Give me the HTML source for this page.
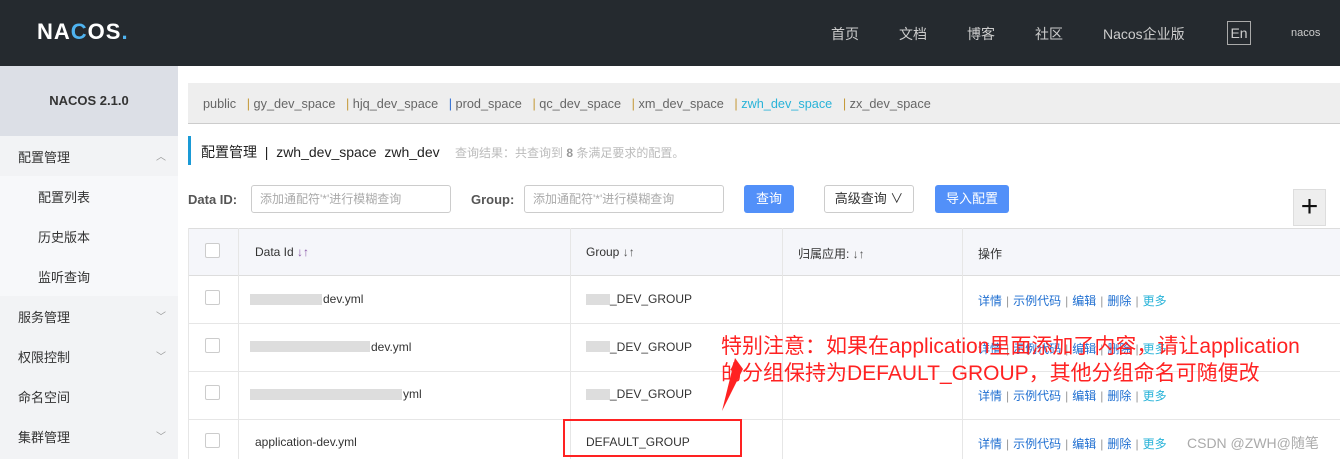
<!DOCTYPE html><html><head><meta charset="utf-8"><style>
*{box-sizing:border-box;margin:0;padding:0}
html,body{width:1340px;height:459px;overflow:hidden}
body{background:#fff;font-family:"Liberation Sans","Noto Sans CJK SC",sans-serif;font-size:12px;color:#333;position:relative}
.a{position:absolute}
.hdr{left:0;top:0;width:1340px;height:66px;background:#252a2f}
.nav{color:#ccc;font-size:14px;top:24px}
.side{left:0;top:66px;width:178px;height:393px;background:#f2f3f5}
.mi{position:absolute;left:0;width:178px;height:40px;line-height:44px;padding-left:18px;font-size:13px;color:#333}
.sub{background:#f7f8fa;padding-left:38px}
.chev{position:absolute;right:12px;top:0;color:#999;font-size:10px}
.ns{color:#666;font-size:12.7px;top:97px}
.bar{color:#c59a3a}
.th{top:228px;height:48px;background:#f5f6fa;border-top:1px solid #ddd;border-bottom:1px solid #ddd}
.row{height:48px;border-bottom:1px solid #e6e6e6}
.vl{width:1px;background:#e6e6e6}
.cb{width:15px;height:15px;border:1px solid #ccc;border-radius:2px;background:#fff}
.op{color:#1f6fd1;font-size:12px}
.op i{color:#999;font-style:normal;margin:0 4px}
.op b{font-weight:normal;color:#29b3d8}
.blur{background:#ddd;height:11px}
.btn{height:28px;line-height:28px;text-align:center;font-size:13px;border-radius:3px}
</style></head><body>
<div class="a hdr"></div>
<div class="a" style="left:37px;top:19px;color:#fff;font-size:22px;font-weight:bold;letter-spacing:1px">NA<span style="color:#4fb3f0">C</span>OS<span style="color:#4fb3f0">.</span></div>
<div class="a nav" style="left:831px">首页</div>
<div class="a nav" style="left:899px">文档</div>
<div class="a nav" style="left:967px">博客</div>
<div class="a nav" style="left:1035px">社区</div>
<div class="a nav" style="left:1103px">Nacos企业版</div>
<div class="a" style="left:1227px;top:21px;width:24px;height:24px;border:1px solid #aaa;color:#ccc;font-size:14px;text-align:center;line-height:22px">En</div>
<div class="a" style="left:1291px;top:27px;color:#ccc;font-size:11px">nacos</div>
<div class="a side"></div>
<div class="a" style="left:0;top:66px;width:178px;height:70px;background:#dcdfe6;text-align:center;line-height:70px;font-weight:bold;font-size:13px;color:#333">NACOS 2.1.0</div>
<div class="mi" style="top:136px">配置管理<span class="chev">︿</span></div>
<div class="mi sub" style="top:176px">配置列表</div>
<div class="mi sub" style="top:216px">历史版本</div>
<div class="mi sub" style="top:256px">监听查询</div>
<div class="mi" style="top:296px">服务管理<span class="chev">﹀</span></div>
<div class="mi" style="top:336px">权限控制<span class="chev">﹀</span></div>
<div class="mi" style="top:376px">命名空间</div>
<div class="mi" style="top:416px">集群管理<span class="chev">﹀</span></div>
<div class="a" style="left:188px;top:83px;width:1152px;height:41px;background:#eee;border-bottom:1px solid #ccc"></div>
<div class="a ns" style="left:203px">public &nbsp; <span class="bar">|</span> gy_dev_space &nbsp; <span class="bar">|</span> hjq_dev_space &nbsp; <span style="color:#2c6bd1">|</span> prod_space &nbsp; <span class="bar">|</span> qc_dev_space &nbsp; <span class="bar">|</span> xm_dev_space &nbsp; <span class="bar">|</span> <span style="color:#29b3d8">zwh_dev_space</span> &nbsp; <span class="bar">|</span> zx_dev_space</div>
<div class="a" style="left:188px;top:136px;width:3px;height:29px;background:#1a9ad6"></div>
<div class="a" style="left:201px;top:142px;font-size:14px;color:#222">配置管理 &nbsp;| &nbsp;zwh_dev_space &nbsp;zwh_dev</div>
<div class="a" style="left:455px;top:144px;font-size:12px;color:#bbb">查询结果：共查询到 <b style="color:#999">8</b> 条满足要求的配置。</div>
<div class="a" style="left:188px;top:192px;font-weight:bold;font-size:13px;color:#555">Data ID:</div>
<div class="a" style="left:251px;top:185px;width:200px;height:28px;border:1px solid #ccc;border-radius:3px;padding-left:8px;line-height:26px;color:#aaa">添加通配符'*'进行模糊查询</div>
<div class="a" style="left:471px;top:192px;font-weight:bold;font-size:13px;color:#555">Group:</div>
<div class="a" style="left:524px;top:185px;width:200px;height:28px;border:1px solid #ccc;border-radius:3px;padding-left:8px;line-height:26px;color:#aaa">添加通配符'*'进行模糊查询</div>
<div class="a btn" style="left:744px;top:185px;width:50px;background:#5290f9;color:#fff">查询</div>
<div class="a btn" style="left:824px;top:185px;width:90px;border:1px solid #ccc;background:#fff;color:#333;line-height:26px">高级查询 ∨</div>
<div class="a btn" style="left:935px;top:185px;width:74px;background:#5290f9;color:#fff">导入配置</div>
<div class="a" style="left:1293px;top:189px;width:33px;height:37px;background:#eee;border:1px solid #ddd;text-align:center;font-size:30px;line-height:34px;color:#111">+</div>
<div class="a th" style="left:188px;width:1152px"></div>
<div class="a" style="left:188px;top:276px;width:1152px"><div class="row"></div><div class="row"></div><div class="row"></div></div>
<div class="a vl" style="left:188px;top:228px;height:231px"></div>
<div class="a vl" style="left:238px;top:228px;height:231px"></div>
<div class="a vl" style="left:570px;top:228px;height:231px"></div>
<div class="a vl" style="left:782px;top:228px;height:231px"></div>
<div class="a vl" style="left:962px;top:228px;height:231px"></div>
<div class="a cb" style="left:205px;top:243px"></div>
<div class="a cb" style="left:205px;top:290px"></div>
<div class="a cb" style="left:205px;top:338px"></div>
<div class="a cb" style="left:205px;top:385px"></div>
<div class="a cb" style="left:205px;top:433px"></div>
<div class="a" style="left:255px;top:245px">Data Id <span style="color:#8a5aa8">↓↑</span></div>
<div class="a" style="left:586px;top:245px">Group <span style="color:#555">↓↑</span></div>
<div class="a" style="left:798px;top:245px">归属应用: <span style="color:#555">↓↑</span></div>
<div class="a" style="left:978px;top:245px">操作</div>
<div class="a blur" style="left:250px;top:294px;width:72px"></div><div class="a" style="left:323px;top:292px">dev.yml</div>
<div class="a blur" style="left:250px;top:341px;width:120px"></div><div class="a" style="left:371px;top:340px">dev.yml</div>
<div class="a blur" style="left:250px;top:389px;width:152px"></div><div class="a" style="left:403px;top:387px">yml</div>
<div class="a" style="left:255px;top:435px">application-dev.yml</div>
<div class="a blur" style="left:586px;top:294px;width:24px"></div><div class="a" style="left:610px;top:292px">_DEV_GROUP</div>
<div class="a blur" style="left:586px;top:341px;width:24px"></div><div class="a" style="left:610px;top:340px">_DEV_GROUP</div>
<div class="a blur" style="left:586px;top:389px;width:24px"></div><div class="a" style="left:610px;top:387px">_DEV_GROUP</div>
<div class="a" style="left:586px;top:435px">DEFAULT_GROUP</div>
<div class="a op" style="left:978px;top:292px">详情<i>|</i>示例代码<i>|</i>编辑<i>|</i>删除<i>|</i><b>更多</b></div>
<div class="a op" style="left:978px;top:340px">详情<i>|</i>示例代码<i>|</i>编辑<i>|</i>删除<i>|</i><b>更多</b></div>
<div class="a op" style="left:978px;top:387px">详情<i>|</i>示例代码<i>|</i>编辑<i>|</i>删除<i>|</i><b>更多</b></div>
<div class="a op" style="left:978px;top:435px">详情<i>|</i>示例代码<i>|</i>编辑<i>|</i>删除<i>|</i><b>更多</b></div>
<div class="a" style="left:1187px;top:433px;color:#aaa;font-size:14px">CSDN @ZWH@随笔</div>
<div class="a" style="left:721px;top:333px;color:#f22;font-size:21px;line-height:27px;white-space:nowrap">特别注意：如果在application里面添加了内容，请让application<br>的分组保持为DEFAULT_GROUP，其他分组命名可随便改</div>
<div class="a" style="left:563px;top:419px;width:179px;height:38px;border:2px solid #f22"></div>
<svg class="a" style="left:715px;top:355px" width="30" height="60"><polygon points="20,3 28,14 7,56" fill="#f22"/></svg>
</body></html>
